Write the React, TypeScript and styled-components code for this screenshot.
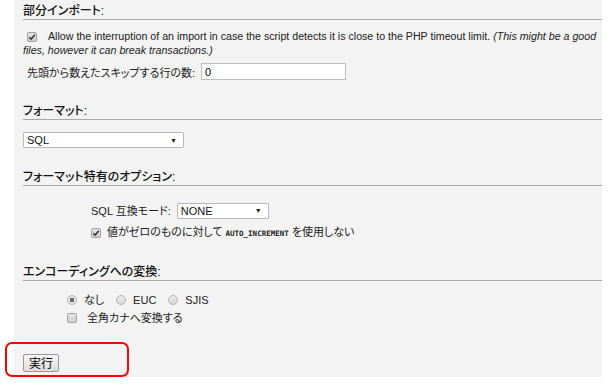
import React from 'react';
import styled, { createGlobalStyle } from 'styled-components';

const GlobalStyle = createGlobalStyle`
  html, body {
    margin: 0;
    padding: 0;
    background: #fff;
  }
  body {
    font-family: "Liberation Sans", "Noto Sans CJK JP", sans-serif;
    font-size: 11px;
    font-feature-settings: "palt";
    color: #222;
  }
`;

export default function App() {
  return (
    <>
      <GlobalStyle />
      <Page>
        <Panel>
          <Section $top={4}>
            <Legend>部分インポート:</Legend>
            <Paragraph>
              <Check $checked />
              Allow the interruption of an import in case the script detects it is close to the PHP
              timeout limit. <em>(This might be a good</em>
              <br />
              <em>files, however it can break transactions.)</em>
            </Paragraph>
            <SkipRow>
              <span>先頭から数えたスキップする行の数:</span>
              <TextInput defaultValue="0" />
            </SkipRow>
          </Section>

          <Section $top={24}>
            <Legend>フォーマット:</Legend>
            <SelectRow $top={12}>
              <Select $width={161} value="SQL" />
            </SelectRow>
          </Section>

          <Section $top={22}>
            <Legend>フォーマット特有のオプション:</Legend>
            <OptionRow $indent={68} $top={17} $gap={6}>
              <span>SQL 互換モード:</span>
              <Select $width={92} value="NONE" />
            </OptionRow>
            <OptionRow $indent={68} $top={6} $gap={6}>
              <Check $checked />
              <span>
                値がゼロのものに対して <Code>AUTO_INCREMENT</Code> を使用しない
              </span>
            </OptionRow>
          </Section>

          <Section $top={24}>
            <Legend>エンコーディングへの変換:</Legend>
            <OptionRow $indent={44} $top={12} $gap={0}>
              <RadioLabel>
                <Radio $checked />
                なし
              </RadioLabel>
              <RadioLabel>
                <Radio />
                EUC
              </RadioLabel>
              <RadioLabel>
                <Radio />
                SJIS
              </RadioLabel>
            </OptionRow>
            <OptionRow $indent={44} $top={4} $gap={10}>
              <Check />
              <span>全角カナへ変換する</span>
            </OptionRow>
          </Section>

          <ButtonRow>
            <Button>実行</Button>
          </ButtonRow>
        </Panel>
        <Highlight />
      </Page>
    </>
  );
}

const Check = ({ $checked }: { $checked?: boolean }) => (
  <CheckBox>
    {$checked && (
      <svg width="8" height="8" viewBox="0 0 8 8">
        <path d="M1.3 4.3 L3.2 6.1 L6.8 1.8" fill="none" stroke="#3a3a3a" strokeWidth="1.6" />
      </svg>
    )}
  </CheckBox>
);

const Select = ({ value, $width }: { value: string; $width: number }) => (
  <SelectBox $width={$width}>
    <span>{value}</span>
    <Arrow>▼</Arrow>
  </SelectBox>
);

const Page = styled.div`
  position: relative;
  width: 610px;
  height: 387px;
  padding-left: 14px;
  box-sizing: border-box;
`;

const Panel = styled.div`
  width: 588px;
  height: 377px;
  background: #f3f3f3;
  padding-left: 9px;
  box-sizing: border-box;
  display: flex;
  flex-direction: column;
`;

const Section = styled.div<{ $top: number }>`
  margin-top: ${(p) => p.$top}px;
  display: flex;
  flex-direction: column;
`;

const Legend = styled.div`
  height: 15px;
  line-height: 15px;
  font-size: 12px;
  font-weight: 500;
  color: #111;
  border-bottom: 1px solid #a8a8a8;
`;

const CheckBox = styled.span`
  flex: none;
  width: 10px;
  height: 10px;
  box-sizing: border-box;
  border: 1px solid #a2a2a2;
  border-radius: 2px;
  background: linear-gradient(#e4e4e4, #cfcfcf);
  display: inline-flex;
  align-items: center;
  justify-content: center;
`;

const Paragraph = styled.div`
  margin-top: 9px;
  line-height: 14px;
  font-size: 10.65px;
  white-space: nowrap;
  em {
    font-style: italic;
  }
  ${CheckBox} {
    vertical-align: -1px;
    margin: 0 11px 0 4px;
  }
`;

const SkipRow = styled.div`
  margin-top: 6px;
  height: 17px;
  display: flex;
  align-items: center;
  padding-left: 4px;
  gap: 6px;
`;

const TextInput = styled.input`
  width: 145px;
  height: 17px;
  box-sizing: border-box;
  border: 1px solid #bdbdbd;
  background: #fff;
  padding: 0 3px;
  font-family: "Liberation Sans", sans-serif;
  font-size: 11px;
  color: #000;
  outline: none;
`;

const SelectRow = styled.div<{ $top: number }>`
  margin-top: ${(p) => p.$top}px;
  display: flex;
`;

const SelectBox = styled.div<{ $width: number }>`
  width: ${(p) => p.$width}px;
  height: 16px;
  box-sizing: border-box;
  border: 1px solid #b8b8b8;
  border-radius: 1px;
  background: #fff;
  display: flex;
  align-items: center;
  justify-content: space-between;
  padding: 0 6px 0 3px;
  font-family: "Liberation Sans", sans-serif;
  font-size: 11px;
  color: #111;
`;

const Arrow = styled.span`
  font-size: 7px;
  color: #222;
`;

const OptionRow = styled.div<{ $indent: number; $top: number; $gap: number }>`
  margin-top: ${(p) => p.$top}px;
  padding-left: ${(p) => p.$indent}px;
  min-height: 14px;
  line-height: 14px;
  display: flex;
  align-items: center;
  gap: ${(p) => p.$gap}px;
`;

const Code = styled.span`
  font-family: "DejaVu Sans Mono", monospace;
  font-size: 7.5px;
  font-weight: bold;
`;

const RadioLabel = styled.label`
  display: inline-flex;
  align-items: center;
  margin-right: 12px;
  font-size: 11px;
`;

const Radio = styled.span<{ $checked?: boolean }>`
  width: 10px;
  height: 10px;
  box-sizing: border-box;
  border: 1px solid #b5b5b5;
  border-radius: 50%;
  background: ${(p) =>
    p.$checked
      ? 'radial-gradient(circle, #6a6a6a 0 2px, #e2e2e2 2.5px)'
      : 'linear-gradient(#ececec, #d6d6d6)'};
  margin-right: 7px;
`;

const ButtonRow = styled.div`
  margin-top: 29px;
  display: flex;
`;

const Button = styled.button`
  width: 36px;
  height: 18px;
  padding: 0;
  box-sizing: border-box;
  border: 1px solid #9a9a9a;
  border-radius: 2px;
  background: linear-gradient(#f6f6f6, #dcdcdc);
  font-family: "Noto Sans CJK JP", sans-serif;
  font-size: 12px;
  line-height: 16px;
  color: #000;
`;

const Highlight = styled.div`
  position: absolute;
  left: 5px;
  top: 342px;
  width: 124px;
  height: 35px;
  box-sizing: border-box;
  border: 2px solid #f00;
  border-radius: 7px;
  pointer-events: none;
`;
